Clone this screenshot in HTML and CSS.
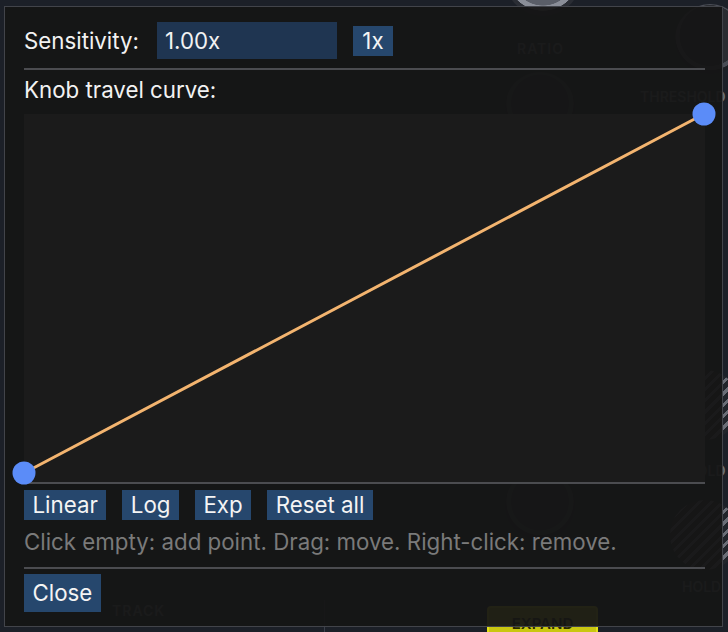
FILE: index.html
```html
<!DOCTYPE html>
<html>
<head>
<meta charset="utf-8">
<link rel="stylesheet" href="styles.css">
</head>
<body>
<div class="scene">
  <div class="knob k1"></div>
  <div class="knob k2"></div>
  <div class="knob k3"></div>
  <div class="knob k4"></div>
  <div class="knob k5"></div>
  <div class="knob k6"></div>
  <div class="lbl l-ratio">RATIO</div>
  <div class="lbl l-thresh">THRESHOLD</div>
  <div class="lbl l-thresh2">THRESHOLD</div>
  <div class="lbl l-hold">HOLD</div>
  <div class="lbl l-track">TRACK</div>
  <div class="expand">EXPAND</div>
  <div class="vline"></div>
</div>

<div class="dialog">
  <div class="row sens-row">
    <span class="label">Sensitivity:</span>
    <div class="input">1.00x</div>
    <button class="btn">1x</button>
  </div>
  <div class="sep"></div>
  <div class="label curve-label">Knob travel curve:</div>
  <div class="canvas">
    <svg class="curve" width="680" height="368" viewBox="0 0 680 368">
      <line x1="0" y1="359" x2="680" y2="0" stroke="#f3b46f" stroke-width="3" stroke-linecap="round"/>
      <circle cx="0" cy="359" r="11.5" fill="#5b8cf8"/>
      <circle cx="680" cy="0" r="11.5" fill="#5b8cf8"/>
    </svg>
  </div>
  <div class="row btn-row">
    <button class="btn">Linear</button>
    <button class="btn">Log</button>
    <button class="btn">Exp</button>
    <button class="btn">Reset all</button>
  </div>
  <div class="help">Click empty: add point. Drag: move. Right-click: remove.</div>
  <div class="sep sep2"></div>
  <div class="row">
    <button class="btn close">Close</button>
  </div>
</div>
</body>
</html>
```

FILE: styles.css
```css
* { box-sizing: border-box; }
html, body {
  margin: 0;
  padding: 0;
  width: 728px;
  height: 632px;
  overflow: hidden;
  background: #1c2028;
  font-family: Inter, "Noto Sans", "Liberation Sans", sans-serif;
}
.scene {
  position: absolute;
  inset: 0;
}
.knob {
  position: absolute;
  border-radius: 50%;
  background: radial-gradient(circle at 50% 45%, #2a2c31 0 55%, #3d4048 56% 64%, #1d1f24 65%);
}
.k1 { left: 505px; top: -60px; width: 76px; height: 76px; background: radial-gradient(circle at 50% 45%, #5a5e68 0 55%, #8a8e98 56% 64%, #2a2d34 65%); }
.k2 { left: 505px; top: 72px; width: 70px; height: 70px; }
.k3 { left: 675px; top: 4px; width: 70px; height: 70px; background: radial-gradient(circle at 50% 45%, #2a2c31 0 58%, #4a4d56 59% 66%, #1d1f24 67%); }
.k4 { left: 670px; top: 370px; width: 70px; height: 70px; background: repeating-linear-gradient(135deg, #22252b 0 5px, #6a6d76 5px 8px); }
.k5 { left: 505px; top: 470px; width: 70px; height: 70px; }
.k6 { left: 670px; top: 500px; width: 70px; height: 70px; background: repeating-linear-gradient(135deg, #22252b 0 5px, #6a6d76 5px 8px); }
.lbl {
  position: absolute;
  color: #6c7078;
  font-size: 14px;
  font-weight: 600;
}
.l-ratio { left: 517px; top: 40px; letter-spacing: 1px; }
.l-thresh { left: 640px; top: 88px; }
.l-thresh2 { left: 640px; top: 462px; }
.l-hold { left: 682px; top: 578px; }
.l-track { left: 112px; top: 602px; letter-spacing: 1px; }
.expand {
  position: absolute;
  left: 487px;
  top: 606px;
  width: 111px;
  height: 34px;
  border: 2px solid #e4e218;
  background: #c9c711;
  border-radius: 4px;
  color: #2a2a00;
  font-size: 15px;
  font-weight: 600;
  text-align: center;
  padding-top: 6px;
}
.vline {
  position: absolute;
  left: 324px;
  top: 600px;
  width: 1px;
  height: 40px;
  background: #3a3f4a;
}

.dialog {
  position: absolute;
  left: 4px;
  top: 6px;
  width: 719px;
  height: 621px;
  border: 1.5px solid #42444a;
  background: rgba(21, 21, 21, 0.94);
  padding: 15px 17px 0 19px;
  display: flex;
  flex-direction: column;
  color: #f2f2f2;
  font-size: 22.3px;
}
.row {
  display: flex;
  align-items: center;
}
.sens-row {
  height: 37px;
}
.label {
  line-height: 26px;
}
.input {
  margin-left: 18px;
  width: 180px;
  height: 37px;
  background: #1f3551;
  padding: 0 8px;
  line-height: 37px;
}
.btn {
  font: inherit;
  color: #f4f4f4;
  background: #26476d;
  border: 0;
  height: 30px;
  padding: 0 8.5px;
  line-height: 30px;
  border-radius: 0;
}
.sens-row .btn {
  margin-left: 16px;
  width: 40px;
  padding: 0;
  text-align: center;
}
.sep {
  height: 2px;
  background: #4b4c50;
  margin-top: 9px;
}
.curve-label {
  margin-top: 7px;
}
.canvas {
  margin-top: 11px;
  height: 370px;
  flex: none;
  background: #1b1b1b;
  border-bottom: 2px solid #4b4c50;
  position: relative;
}
.curve {
  position: absolute;
  left: 0;
  top: 0;
  overflow: visible;
}
.btn-row {
  margin-top: 6px;
  gap: 16px;
}
.help {
  margin-top: 9px;
  line-height: 26px;
  color: #7a7a7a;
}
.sep2 {
  margin-top: 12px;
}
.close {
  margin-top: 5px;
  height: 38px;
  line-height: 38px;
}
```
